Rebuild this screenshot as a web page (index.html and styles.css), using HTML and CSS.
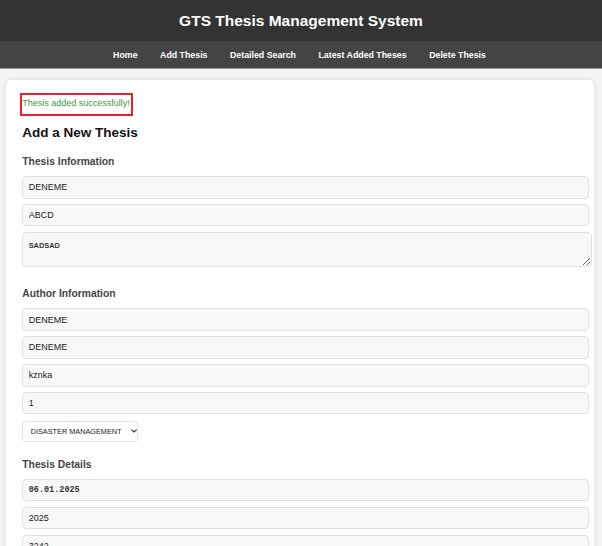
FILE: index.html
```html
<!DOCTYPE html>
<html lang="en">
<head>
<meta charset="utf-8">
<title>GTS Thesis Management System</title>
<link rel="stylesheet" href="styles.css">
</head>
<body>
<header class="site-header">
  <h1 class="site-title">GTS Thesis Management System</h1>
</header>
<nav class="site-nav">
  <a href="#">Home</a>
  <a href="#">Add Thesis</a>
  <a href="#">Detailed Search</a>
  <a href="#">Latest Added Theses</a>
  <a href="#">Delete Thesis</a>
</nav>
<main class="container">
  <div class="msg">Thesis added successfully!</div>
  <h2 class="page-title">Add a New Thesis</h2>
  <form class="form">
    <h3 class="section-title first">Thesis Information</h3>
    <div class="group">
      <input class="field" type="text" value="DENEME">
      <input class="field" type="text" value="ABCD">
      <textarea class="area">SADSAD</textarea>
    </div>
    <h3 class="section-title author">Author Information</h3>
    <div class="group">
      <input class="field" type="text" value="DENEME">
      <input class="field" type="text" value="DENEME">
      <input class="field" type="text" value="kznka">
      <input class="field" type="text" value="1">
      <div class="select-wrap">
        <select class="pick">
          <option>DISASTER MANAGEMENT</option>
        </select>
        <svg class="chev" width="6" height="4" viewBox="0 0 6 4" aria-hidden="true"><path d="M0.7 0.8 L3 3 L5.3 0.8" fill="none" stroke="#333" stroke-width="1.1" stroke-linecap="round" stroke-linejoin="round"/></svg>
      </div>
    </div>
    <h3 class="section-title details">Thesis Details</h3>
    <div class="group">
      <input class="field mono" type="text" value="06.01.2025">
      <input class="field" type="text" value="2025">
      <input class="field" type="text" value="3242">
      <input class="field" type="text" value="Turkish">
      <input class="field" type="text" value="Master">
    </div>
  </form>
</main>
</body>
</html>
```
FILE: styles.css
```css
html {
  overflow: hidden;
}
body {
  margin: 0;
  background: #f4f4f4;
  font-family: "Liberation Sans", Arial, sans-serif;
  color: #222;
}
.site-header {
  background: #333;
  height: 41px;
}
.site-title {
  margin: 0;
  text-align: center;
  color: #fff;
  font-size: 15.5px;
  line-height: 41px;
  font-weight: bold;
}
.site-nav {
  background: #444;
  height: 26px;
  padding-top: 1px;
  display: flex;
  justify-content: center;
  gap: 22.5px;
  border-bottom: 1px solid #9a9a9a;
  padding-right: 3px;
}
.site-nav a {
  color: #fff;
  text-decoration: none;
  font-weight: bold;
  font-size: 8.8px;
  line-height: 26px;
}
.container {
  background: #fff;
  margin: 11px 8px 0 6px;
  padding: 15.3px 4.7px 30px 16.3px;
  border-radius: 5px;
  box-shadow: 0 0 5px rgba(0, 0, 0, 0.12);
}
.msg {
  width: fit-content;
  padding: 3px 1px 5px 0;
  line-height: 10.7px;
  font-size: 9px;
  color: #3a9d3a;
  outline: 2px solid #e8222a;
  outline-offset: 0;
}
.page-title {
  margin: 10.6px 0 0;
  font-size: 13.5px;
  line-height: 16px;
  font-weight: bold;
  color: #111;
}
.form {
  margin: 0;
}
.section-title {
  margin: 17.5px 0 0;
  font-size: 10.3px;
  line-height: 12px;
  font-weight: bold;
  color: #444;
}
.section-title.first {
  margin-top: 15.5px;
}
.section-title.author {
  margin-top: 21.2px;
}
.group {
  margin-top: 8.2px;
  display: flex;
  flex-direction: column;
  align-items: flex-start;
  gap: 5.6px;
}
.field {
  box-sizing: border-box;
  width: 100%;
  height: 22.3px;
  margin: 0;
  padding: 0 5.4px;
  background: #f8f8f8;
  border: 1px solid #e0e0e0;
  border-radius: 4px;
  font-family: "Liberation Sans", Arial, sans-serif;
  font-size: 9px;
  color: #1a1a1a;
}
.field.mono {
  font-family: "Liberation Mono", "Courier New", monospace;
  font-size: 8.5px;
  font-weight: bold;
  color: #333;
}
.area {
  box-sizing: border-box;
  width: calc(100% + 2.7px);
  height: 35px;
  margin: 0;
  padding: 8px 5.4px;
  background: #f8f8f8;
  border: 1px solid #e0e0e0;
  border-radius: 4px;
  font-family: "Liberation Sans", Arial, sans-serif;
  font-size: 7.4px;
  font-weight: bold;
  color: #333;
}
.select-wrap {
  position: relative;
  width: 116px;
  height: 21.4px;
}
.pick {
  -webkit-appearance: none;
  appearance: none;
  box-sizing: border-box;
  width: 116px;
  height: 21.4px;
  margin: 0;
  padding: 0 0 0 7.4px;
  background: #fff;
  border: 1px solid #e0e0e0;
  border-radius: 4px;
  font-family: "Liberation Sans", Arial, sans-serif;
  font-size: 7.3px;
  color: #222;
}
.chev {
  position: absolute;
  left: 109px;
  top: 9px;
  pointer-events: none;
}
```
